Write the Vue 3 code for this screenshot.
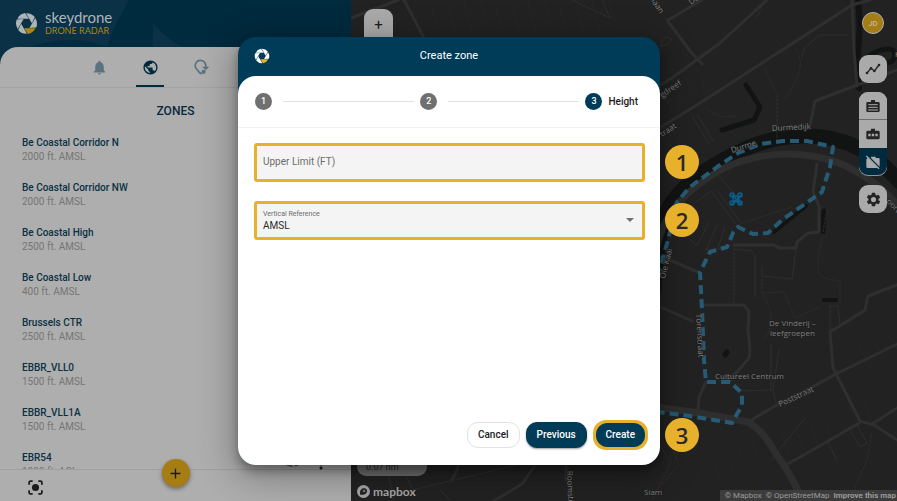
<template>
  <div class="app-shell">
    <aside class="sidebar">
      <header class="brand-bar">
        <svg class="brand-shapes" viewBox="0 0 351 72" preserveAspectRatio="xMinYMin slice" aria-hidden="true">
          <path d="M0 0H129C117 22 111 34 107 47C80 36 40 36 0 62Z" />
          <path d="M153 22C160 32 170 40 184 48V72H152Z" />
        </svg>
        <svg class="brand-logo" viewBox="-12 -12 24 24" aria-hidden="true">
          <path v-for="(blade, i) in blades" :key="i" :d="bladePath" :fill="blade.side" :transform="`rotate(${blade.angle})`" />
        </svg>
        <div class="brand-text">
          <span class="brand-name">skeydrone</span>
          <span class="brand-product">DRONE RADAR</span>
        </div>
      </header>

      <div class="side-card">
        <nav class="tabs">
          <button class="tab" type="button" aria-label="Alerts">
            <svg viewBox="0 0 24 24"><path d="M12 22c1.1 0 2-.9 2-2h-4c0 1.1.9 2 2 2zm6-6v-5c0-3.07-1.63-5.64-4.5-6.32V4a1.5 1.5 0 0 0-3 0v.68C7.64 5.36 6 7.92 6 11v5l-2 2v1h16v-1z" /></svg>
          </button>
          <button class="tab active" type="button" aria-label="Zones">
            <svg viewBox="0 0 24 24"><path d="M12 2a10 10 0 1 0 0 20 10 10 0 0 0 0-20zm-1 17.93A8 8 0 0 1 4.21 10.21L9 15v1c0 1.1.9 2 2 2zm6.9-2.54A2 2 0 0 0 16 16h-1v-3c0-.55-.45-1-1-1H8v-2h2c.55 0 1-.45 1-1V7h2c1.1 0 2-.9 2-2v-.41a8 8 0 0 1 2.9 12.8z" /></svg>
          </button>
          <button class="tab" type="button" aria-label="Flights">
            <svg viewBox="0 0 24 24"><path d="M11 21C6 16 3 13 3 10a7.500 7.500 0 0 1 15-1v3" fill="none" stroke="currentColor" stroke-width="2.400" /><path d="M13 11h10l-5 5z" /><circle cx="15" cy="18" r="3" /><path d="M9 18l2 4 3-2z" /></svg>
          </button>
          <button class="tab" type="button" aria-label="Layers">
            <svg viewBox="0 0 24 24"><path d="M12 3 3 10l9 7 9-7z" /></svg>
          </button>
        </nav>

        <h2 class="side-title">ZONES</h2>

        <ul class="zone-list">
          <li v-for="zone in zones" :key="zone.name" class="zone-item">
            <span class="zone-name">{{ zone.name }}</span>
            <span class="zone-height">{{ zone.height }}</span>
          </li>
        </ul>

        <footer class="side-footer">
          <button class="icon-button focus" type="button" aria-label="Center map">
            <svg viewBox="0 0 24 24"><path d="M3 8V5a2 2 0 0 1 2-2h3M16 3h3a2 2 0 0 1 2 2v3M21 16v3a2 2 0 0 1-2 2h-3M8 21H5a2 2 0 0 1-2-2v-3" fill="none" stroke="currentColor" stroke-width="2.500" /><circle cx="12" cy="12" r="5" /></svg>
          </button>
          <button class="fab" type="button" aria-label="Add zone">
            <svg viewBox="0 0 24 24"><path d="M12 3v18M3 12h18" fill="none" stroke="currentColor" stroke-width="2.500" /></svg>
          </button>
          <span class="footer-extras" aria-hidden="true">
            <svg class="hidden-eye" viewBox="0 0 18 12"><path d="M1 5C4 0 14 0 17 5S4 11 1 5z" /><path d="M5 1l9 9" stroke="#aeaeae" stroke-width="2" /></svg>
            <svg class="more" viewBox="0 0 4 12"><circle cx="2" cy="2" r="1.500" /><circle cx="2" cy="6" r="1.500" /><circle cx="2" cy="10" r="1.500" /></svg>
          </span>
        </footer>
      </div>
    </aside>

    <main class="map">
      <svg class="map-canvas" viewBox="351 0 546 501" preserveAspectRatio="xMinYMin slice" aria-label="Map">
        <rect x="351" y="0" width="546" height="501" fill="#222222" />
        <g class="plots">
          <path v-for="(d, i) in plots" :key="i" :d="d" />
        </g>
        <g class="water">
          <path d="M654 290C656 250 661 218 672 202C690 178 720 160 745 149C785 131 830 132 862 150C878 158 888 170 900 182" stroke-width="15" />
          <path d="M746 85L760 107L754 120L722 130" stroke-width="5" />
          <path d="M806 206L774 232" stroke-width="4" />
          <path d="M824 211L823 232" stroke-width="5" />
          <path d="M824 300H836" stroke-width="4" />
          <path d="M727 352L725 355" stroke-width="5" />
          <path d="M858 2C862 25 858 40 858 58C860 66 858 76 859 88" stroke-width="6" />
          <path d="M860 62C870 55 882 46 893 50C897 58 893 64 884 62C876 58 870 62 860 66" stroke-width="5" />
        </g>
        <g class="roads minor">
          <path v-for="(d, i) in minorRoads" :key="i" :d="d" />
        </g>
        <g class="roads major">
          <path v-for="(d, i) in majorRoads" :key="i" :d="d" />
        </g>
        <g class="roads wide">
          <path d="M656 250C664 210 690 187 724 168C765 149 810 151 844 165C870 178 885 190 900 208" />
          <path d="M640 405L700 413L748 422C767 433 770 447 784 465C792 479 797 486 803 505" />
        </g>
        <g class="paths">
          <path v-for="(d, i) in footPaths" :key="i" :d="d" />
        </g>
        <path class="zone-outline" d="M640 330L661 265L668 240L677 202L690 187L717 167L738 153L760 144L783 141L807 141L833 147L830 167L822 192L782 220L768 233L753 234L738 227L733 233L727 247L710 252L700 272L702 310L704 360L706 382L730 382L742 393L742 405L732 423L683 415L640 410" />
        <g class="drone">
          <path d="M732 195L741 204M741 195L732 204" />
          <circle cx="732" cy="195" r="2" /><circle cx="740" cy="195" r="2" />
          <circle cx="732" cy="203" r="2" /><circle cx="740" cy="203" r="2" />
          <circle cx="736" cy="199" r="3" />
        </g>
        <g class="labels">
          <text v-for="label in mapLabels" :key="label.text" :transform="`translate(${label.x} ${label.y}) rotate(${label.angle})`">{{ label.text }}</text>
        </g>
      </svg>

      <div class="zoom-control">
        <button type="button" aria-label="Zoom in">+</button>
        <button type="button" aria-label="Zoom out">−</button>
      </div>

      <div class="tools">
        <button class="avatar" type="button">JD</button>
        <button class="tool" type="button" aria-label="Tracks">
          <svg viewBox="0 0 24 24"><path d="M3 18l6-7 5 4 7-9" fill="none" stroke="currentColor" stroke-width="2" /><circle cx="3" cy="18" r="2" /><circle cx="9" cy="11" r="2" /><circle cx="14" cy="15" r="2" /><circle cx="21" cy="6" r="2" /></svg>
        </button>
        <div class="tool-group">
          <button class="tool" type="button" aria-label="Full label">
            <svg viewBox="0 0 24 24"><path d="M9 6V3h6v3h5a2 2 0 0 1 2 2v11a2 2 0 0 1-2 2H4a2 2 0 0 1-2-2V8a2 2 0 0 1 2-2z" /><path d="M5 10h14M5 14h14" stroke="#aaaaaa" stroke-width="1.500" /><path d="M5 18h14" stroke="#aaaaaa" stroke-width="2" stroke-dasharray="2 1" /></svg>
          </button>
          <button class="tool" type="button" aria-label="Short label">
            <svg viewBox="0 0 24 24"><path d="M9 7V4h6v3h5a2 2 0 0 1 2 2v9a2 2 0 0 1-2 2H4a2 2 0 0 1-2-2V9a2 2 0 0 1 2-2z" /><path d="M5 13.500h3.500M10.200 13.500h3.500M15.500 13.500h3.500" stroke="#aaaaaa" stroke-width="3.500" /></svg>
          </button>
          <button class="tool selected" type="button" aria-label="No label">
            <svg viewBox="0 0 24 24"><path d="M9 6V4h7v2h4a2 2 0 0 1 2 2v11L9 6zM4 6l15 15H4a2 2 0 0 1-2-2V8l2-2z" /><path d="M2 3l19 19" fill="none" stroke="currentColor" stroke-width="2" /></svg>
          </button>
        </div>
        <button class="tool" type="button" aria-label="Settings">
          <svg class="gear" viewBox="0 0 24 24"><path d="M19.140 12.940a7 7 0 0 0 0-1.880l2.030-1.580a.5.5 0 0 0 .12-.61l-1.920-3.320a.5.5 0 0 0-.59-.22l-2.390.96a7 7 0 0 0-1.620-.94l-.36-2.540a.5.5 0 0 0-.48-.41h-3.840a.5.5 0 0 0-.47.41l-.36 2.540a7 7 0 0 0-1.620.94l-2.390-.96a.5.5 0 0 0-.59.22L2.740 8.870a.5.5 0 0 0 .12.61l2.030 1.580a7 7 0 0 0 0 1.880l-2.030 1.580a.5.5 0 0 0-.12.61l1.920 3.320c.12.22.37.29.59.22l2.390-.96c.5.38 1.030.7 1.620.94l.36 2.540c.05.24.24.41.48.41h3.840c.24 0 .44-.17.47-.41l.36-2.540a7 7 0 0 0 1.620-.94l2.390.96c.22.08.47 0 .59-.22l1.920-3.320a.5.5 0 0 0-.12-.61zM12 15.600a3.600 3.600 0 1 1 0-7.200 3.600 3.600 0 0 1 0 7.200z" /></svg>
        </button>
      </div>

      <div class="map-corner">
        <div class="scale">0.07 nm</div>
        <div class="mapbox">
          <svg viewBox="0 0 24 24" aria-hidden="true"><circle cx="12" cy="12" r="12" fill="#a6a6a6" /><path d="M6 18C4 9 9 5 14 6c5 1 6 6 3 9s-7 3-11 3z" fill="#222222" /><path d="M13 8l1 2 2 1-2 1-1 2-1-2-2-1 2-1z" fill="#a6a6a6" /></svg>
          <span>mapbox</span>
        </div>
      </div>
      <div class="attribution">
        <a href="#">© Mapbox</a>
        <a href="#">© OpenStreetMap</a>
        <a class="improve" href="#">Improve this map</a>
      </div>
    </main>

    <div class="modal-layer">
      <form class="modal" role="dialog" aria-labelledby="modal-title" @submit.prevent>
        <header class="modal-header">
          <svg class="modal-logo" viewBox="-12 -12 24 24" aria-hidden="true">
            <path v-for="(blade, i) in blades" :key="i" :d="bladePath" :fill="blade.modal" :transform="`rotate(${blade.angle})`" />
          </svg>
          <h1 id="modal-title">Create zone</h1>
        </header>

        <div class="modal-body">
          <ol class="stepper">
            <li class="step"><span class="step-number">1</span></li>
            <li class="step-line" aria-hidden="true"></li>
            <li class="step"><span class="step-number">2</span></li>
            <li class="step-line" aria-hidden="true"></li>
            <li class="step current"><span class="step-number">3</span>Height</li>
          </ol>

          <div class="fields">
            <div class="field">
              <label v-show="upperLimit === ''" for="upper-limit" class="inside-label">Upper Limit (FT)</label>
              <input id="upper-limit" v-model="upperLimit" type="text" />
              <span class="callout">1</span>
            </div>
            <div class="field select-field">
              <label for="vertical-reference">Vertical Reference</label>
              <select id="vertical-reference" v-model="verticalReference">
                <option>AMSL</option>
                <option>AGL</option>
              </select>
              <svg class="arrow" viewBox="0 0 8 4" aria-hidden="true"><path d="M0 0h8L4 4z" /></svg>
              <span class="callout">2</span>
            </div>
          </div>

          <footer class="actions">
            <button class="btn" type="button">Cancel</button>
            <button class="btn primary" type="button">Previous</button>
            <div class="highlight">
              <button class="btn primary" type="submit">Create</button>
              <span class="callout">3</span>
            </div>
          </footer>
        </div>
      </form>
    </div>
  </div>
</template>

<script setup>
import { ref } from 'vue'

const upperLimit = ref('')
const verticalReference = ref('AMSL')

const zones = [
  { name: 'Be Coastal Corridor N', height: '2000 ft. AMSL' },
  { name: 'Be Coastal Corridor NW', height: '2000 ft. AMSL' },
  { name: 'Be Coastal High', height: '2500 ft. AMSL' },
  { name: 'Be Coastal Low', height: '400 ft. AMSL' },
  { name: 'Brussels CTR', height: '2500 ft. AMSL' },
  { name: 'EBBR_VLL0', height: '1500 ft. AMSL' },
  { name: 'EBBR_VLL1A', height: '1500 ft. AMSL' },
  { name: 'EBR54', height: '1000 ft. AGL' }
]

// logo blades, one of them in the accent colour
const bladePath = 'M-9.500 -5A11 11 0 0 1 -1.500 -10.900L2.500 -5Z'
const blades = [0, 60, 120, 180, 240, 300].map(angle => ({
  angle,
  side: angle === 180 ? '#b08415' : '#adb5b9',
  modal: angle === 180 ? '#e8b12b' : '#ffffff'
}))

// map geometry
const majorRoads = [
  'M351 18L398 0',
  'M404 0L424 38',
  'M640 140L700 103L852 5L870 0',
  'M640 98L672 78L720 43L767 0',
  'M667 20L690 51L702 64',
  'M852 0L854 50L857 86',
  'M897 70L815 101L810 125',
  'M817 164L813 192L819 206V232L808 233L797 242L796 248H780L773 245H734',
  'M704 305H744L749 312L748 330L750 350L749 358L737 372L724 382',
  'M897 285L868 296L865 310L830 332L833 368L860 421L874 425L897 440',
  'M748 422L780 403L805 391L836 374L897 344',
  'M786 465L830 440L861 422M872 424L900 406',
  'M698 412L699 397L706 382',
  'M668 20L702 0',
  'M458 462V468L452 480',
  'M492 502L522 484L536 464',
  'M566 464V480',
  'M640 250L672 261L700 273',
  'M640 298L692 321'
]
const minorRoads = [
  'M796 248L794 265L792 279L762 276V267',
  'M734 249L752 251L755 257V297',
  'M738 227L712 192M740 222L718 191',
  'M830 306H838L840 326M830 306V332',
  'M692 116L709 144M697 114L713 141',
  'M850 430L860 447L867 443L857 425',
  'M828 442L837 461',
  'M740 391L773 390L777 407M773 390L779 350',
  'M771 460L805 418',
  'M771 345V390',
  'M709 222L697 246L690 240M717 225L706 250L728 248M725 227L718 248',
  'M712 191L696 202M719 176L742 202',
  'M386 464L394 500M401 464L413 490L475 475L520 464',
  'M440 490L450 500M610 18L602 0M610 18L572 0',
  'M662 46C660 38 665 35 672 39L667 45L660 46',
  'M755 18L762 9M802 58L804 48L820 35L847 35'
]
const footPaths = [
  'M796 49C806 65 797 80 785 100',
  'M765 70L777 93V141',
  'M706 108C720 120 728 116 737 116',
  'M827 210L818 260C816 280 824 278 840 281L840 306',
  'M734 249V304',
  'M763 294C768 305 778 320 764 340',
  'M762 275V293L784 292L795 318L818 308',
  'M738 225L770 214L792 207',
  'M671 445L679 465L661 485M651 430L671 463L652 500',
  'M872 432L867 460L858 480L850 500'
]
const plots = []
for (let i = 0; i < 12; i++) {
  plots.push(`M${660 + i * 12} ${90 - i * 7}l12 18`)
  plots.push(`M${720 + i * 14} ${480 - i * 5}l-10 -24`)
  plots.push(`M${440 + i * 16} ${38 - (i % 4) * 3}l-8 -30`)
  plots.push(`M${830 + (i % 5) * 14} ${360 - i * 7}l12 18`)
}

const mapLabels = [
  { text: 'Durmedijk', x: 772, y: 131, angle: -3 },
  { text: 'Durme', x: 732, y: 153, angle: -18 },
  { text: 'De Vinderij –', x: 769, y: 326, angle: 0 },
  { text: 'leefgroepen', x: 770, y: 336, angle: 0 },
  { text: 'Cultureel Centrum', x: 715, y: 379, angle: 0 },
  { text: 'Poststraat', x: 780, y: 407, angle: -25 },
  { text: 'Torenstraat', x: 696, y: 314, angle: 87 },
  { text: 'Ole Kaai', x: 665, y: 279, angle: -76 },
  { text: 'Siam', x: 644, y: 495, angle: 0 },
  { text: 'Roomstraat', x: 567, y: 471, angle: 88 },
  { text: 'gdreef', x: 662, y: 98, angle: -34 },
  { text: 'traat', x: 662, y: 137, angle: -33 },
  { text: 'laan', x: 651, y: 1, angle: 55 },
  { text: 'Dam', x: 691, y: 5, angle: -35 },
  { text: 'oort', x: 886, y: 202, angle: 45 },
  { text: 'Kon', x: 895, y: 57, angle: 0 }
]
</script>

<style>
body {
  margin: 0;
  background: #222222;
}
</style>

<style scoped>
.app-shell {
  display: flex;
  height: 100vh;
  min-height: 480px;
  overflow: hidden;
  position: relative;
  font-family: Roboto, "Liberation Sans", sans-serif;
  color: #1c1c1c;
}

button {
  font-family: inherit;
  padding: 0;
  border: none;
  cursor: pointer;
}

svg {
  display: block;
  fill: currentColor;
}

/* sidebar */
.sidebar {
  flex: 0 0 351px;
  display: flex;
  flex-direction: column;
  background: #002a3e;
}

.brand-bar {
  position: relative;
  display: flex;
  align-items: center;
  gap: 7px;
  height: 47px;
  padding-left: 15px;
}

.brand-shapes {
  position: absolute;
  top: 0;
  left: 0;
  width: 100%;
  height: 72px;
  fill: #0a3146;
}

.brand-logo {
  position: relative;
  width: 23px;
  height: 23px;
}

.brand-text {
  position: relative;
  display: flex;
  flex-direction: column;
  padding-bottom: 2px;
  font-family: Lato, sans-serif;
}

.brand-name {
  font-size: 15px;
  line-height: 16px;
  color: #adb5b9;
}

.brand-product {
  font-size: 9px;
  line-height: 11px;
  color: #b08415;
}

.side-card {
  position: relative;
  flex: 1;
  min-height: 0;
  display: flex;
  flex-direction: column;
  background: #aeaeae;
  border-radius: 18px 18px 0 0;
}

.tabs {
  display: flex;
  justify-content: center;
  gap: 23px;
  height: 40px;
  border-bottom: 1px solid #a3a3a3;
}

.tab {
  display: flex;
  align-items: center;
  justify-content: center;
  width: 28px;
  padding-top: 2px;
  background: none;
  color: #5a737e;
  border-bottom: 2px solid transparent;
}

.tab svg {
  flex: none;
  width: 17px;
  height: 17px;
}

.tab.active {
  color: #002a3e;
  border-bottom-color: #002a3e;
}

.side-title {
  margin: 15px 0 0;
  font-size: 12px;
  line-height: 16px;
  font-weight: 500;
  text-align: center;
  color: #06293b;
}

.zone-list {
  flex: 1;
  min-height: 0;
  overflow: hidden;
  margin: 0;
  padding: 17px 22px 0;
  list-style: none;
}

.zone-item {
  display: flex;
  flex-direction: column;
  height: 45px;
}

.zone-name {
  font-size: 10px;
  line-height: 14px;
  font-weight: 500;
  color: #0b3144;
}

.zone-height {
  font-size: 10px;
  line-height: 14px;
  color: #757575;
}

.side-footer {
  display: grid;
  grid-template-columns: 1fr auto 1fr;
  height: 31px;
  border-top: 1px solid #a0a0a0;
}

.icon-button {
  justify-self: start;
  align-self: center;
  margin: 4px 0 0 27px;
  background: none;
  color: #1c1c1c;
}

.icon-button svg {
  width: 17px;
  height: 17px;
}

.fab {
  display: flex;
  align-items: center;
  justify-content: center;
  width: 28px;
  height: 28px;
  margin-top: -11px;
  border-radius: 50%;
  background: #a57d14;
  color: #1c1c1c;
  box-shadow: 0 2px 4px rgba(0, 0, 0, 0.4);
}

.fab svg {
  width: 13px;
  height: 13px;
}

.footer-extras {
  display: flex;
  gap: 20px;
  justify-content: flex-end;
  margin-top: -12px;
  padding-right: 28px;
}

.hidden-eye {
  width: 16px;
  height: 12px;
  color: #555555;
}

.more {
  width: 4px;
  height: 12px;
}

/* map */
.map {
  position: relative;
  flex: 1;
  min-width: 0;
  overflow: hidden;
}

.map-canvas {
  width: 100%;
  height: 100%;
}

.map-canvas path {
  fill: none;
  stroke-linecap: round;
  stroke-linejoin: round;
}

.plots path {
  stroke: #262626;
}

.water path {
  stroke: #121414;
}

.roads.minor path {
  stroke: #2e2e2e;
}

.roads.major path {
  stroke: #2f2f2f;
  stroke-width: 3;
}

.roads.wide path {
  stroke: #2e2e2e;
  stroke-width: 7;
}

.paths path {
  stroke: #2e2e2e;
  stroke-dasharray: 2 2;
}

.map-canvas .zone-outline {
  stroke: #265b75;
  stroke-width: 4;
  stroke-linecap: butt;
  stroke-dasharray: 9 5;
}

.drone path,
.drone circle {
  fill: none;
  stroke: #0b608f;
  stroke-width: 1.5;
}

.labels text {
  font-family: "Open Sans", sans-serif;
  font-size: 8px;
  fill: #818181;
  stroke: #1c1c1c;
  stroke-width: 1px;
  paint-order: stroke;
}

.zoom-control {
  position: absolute;
  top: 9px;
  left: 13px;
  display: flex;
  flex-direction: column;
  overflow: hidden;
  border-radius: 9px;
  background: #aaaaaa;
}

.zoom-control button {
  width: 29px;
  height: 32px;
  background: none;
  color: #1c1c1c;
  font-size: 15px;
}

.tools {
  position: absolute;
  top: 12px;
  right: 10px;
  display: flex;
  flex-direction: column;
  align-items: center;
  gap: 9px;
}

.avatar {
  box-sizing: border-box;
  width: 22px;
  height: 22px;
  margin-bottom: 12px;
  border: 1px solid #b0b0b0;
  border-radius: 50%;
  background: #a57d14;
  color: #c0b89a;
  font-size: 8px;
  font-weight: 500;
}

.tool {
  display: flex;
  align-items: center;
  justify-content: center;
  width: 28px;
  height: 28px;
  border-radius: 9px;
  background: #aaaaaa;
  color: #242424;
}

.tool svg {
  width: 16px;
  height: 16px;
}

.tool .gear {
  width: 17px;
  height: 17px;
}

.tool-group {
  overflow: hidden;
  border-radius: 9px;
  background: #aaaaaa;
}

.tool-group .tool {
  border-radius: 0;
}

.tool-group .tool + .tool {
  box-shadow: 0 -1px #6c6c6c;
}

.tool-group .tool.selected {
  background: #002a3e;
  color: #aaaaaa;
  border-radius: 0 0 9px 9px;
  box-shadow: inset 0 -1px #8b969b;
}

.map-corner {
  position: absolute;
  left: 6px;
  bottom: 3px;
  display: flex;
  flex-direction: column;
  gap: 9px;
}

.scale {
  box-sizing: border-box;
  width: 70px;
  height: 21px;
  padding-left: 9px;
  border-radius: 9px;
  background: #6e6e6e;
  color: #242424;
  font-size: 9px;
  line-height: 24px;
}

.mapbox {
  display: flex;
  align-items: center;
  gap: 3px;
  font-family: Lato, sans-serif;
  font-size: 12px;
  line-height: 13px;
  font-weight: 700;
  color: #a6a6a6;
}

.mapbox svg {
  width: 13px;
  height: 13px;
}

.attribution {
  position: absolute;
  right: 0;
  bottom: 0;
  display: flex;
  gap: 4px;
  padding: 0 1px 0 5px;
  background: #3c3c3c;
  font-size: 8px;
  line-height: 11px;
  white-space: nowrap;
}

.attribution a {
  color: #9a9a9a;
  text-decoration: none;
}

.attribution .improve {
  font-weight: 700;
}

/* modal */
.modal-layer {
  position: absolute;
  inset: 0;
  display: flex;
  align-items: center;
  justify-content: center;
  padding-left: 1px;
}

.modal {
  display: flex;
  flex-direction: column;
  width: 422px;
  max-width: 90%;
  min-height: 428px;
  border-radius: 18px;
  background: #003b57;
  box-shadow: 0 6px 10px rgba(0, 0, 0, 0.3), 0 8px 36px 4px rgba(0, 0, 0, 0.3);
}

.modal-header {
  display: grid;
  grid-template-columns: 1fr auto 1fr;
  align-items: center;
  height: 39px;
  padding: 0 16px;
}

.modal-logo {
  width: 16px;
  height: 16px;
}

.modal-header h1 {
  margin: 0;
  font-size: 11px;
  line-height: 16px;
  font-weight: 400;
  color: #ffffff;
}

.modal-body {
  flex: 1;
  display: flex;
  flex-direction: column;
  border-radius: 18px;
  background: #ffffff;
}

.stepper {
  display: flex;
  align-items: center;
  height: 51px;
  margin: 0;
  padding: 0 22px 0 17px;
  list-style: none;
  border-bottom: 1px solid #f2f2f2;
}

.step {
  display: flex;
  align-items: center;
  gap: 6px;
  font-size: 10px;
  font-weight: 500;
}

.step-number {
  width: 17px;
  height: 17px;
  border-radius: 50%;
  background: #707070;
  color: #ffffff;
  font-size: 9px;
  line-height: 17px;
  text-align: center;
}

.step.current .step-number {
  background: #003b57;
}

.step-line {
  flex: 1;
  height: 1px;
  margin: 0 6px 0 11px;
  background: #e2e2e2;
}

.fields {
  flex: 1;
  display: flex;
  flex-direction: column;
  gap: 19px;
  padding: 15px 15px 15px 16px;
}

.field {
  position: relative;
  box-sizing: border-box;
  display: grid;
  align-items: center;
  height: 39px;
  padding: 0 6px;
  border: 3px solid #e8b12b;
  border-radius: 3px;
  background: #f4f4f4;
}

.field label {
  font-size: 10px;
  line-height: 12px;
  color: #6c6c6c;
}

.inside-label,
.field input {
  grid-area: 1 / 1;
}

.field input,
.field select {
  width: 100%;
  padding: 0;
  border: none;
  outline: none;
  background: none;
  font-family: inherit;
  font-size: 10px;
  line-height: 12px;
  color: #2a2a2a;
}

.select-field {
  grid-template-columns: 1fr 8px;
  align-content: center;
  padding: 0 8px 0 6px;
}

.select-field label {
  grid-area: 1 / 1;
  font-size: 7px;
}

.select-field select {
  grid-area: 2 / 1;
  appearance: none;
}

.arrow {
  grid-area: 1 / 2 / 3 / 3;
  width: 8px;
  height: 4px;
  color: #707070;
}

.callout {
  position: absolute;
  top: 50%;
  left: calc(100% + 23px);
  width: 34px;
  height: 34px;
  margin-top: -17px;
  border-radius: 50%;
  background: #e8b12b;
  color: #2a2a2a;
  font-family: "Open Sans", sans-serif;
  font-size: 22px;
  font-weight: 600;
  line-height: 34px;
  text-align: center;
}

.actions {
  display: flex;
  align-items: center;
  justify-content: flex-end;
  gap: 6px;
  padding: 0 12px 15px;
}

.btn {
  box-sizing: border-box;
  height: 26px;
  padding: 0 10px;
  border: 1px solid #e2e2e2;
  border-radius: 11px;
  background: #ffffff;
  color: #1c1c1c;
  font-size: 10px;
  font-weight: 500;
}

.btn.primary {
  border-color: #003b57;
  background: #003b57;
  color: #ffffff;
  box-shadow: 0 1px 2px rgba(0, 0, 0, 0.4);
}

.highlight {
  position: relative;
  display: flex;
  border: 3px solid #e8b12b;
  border-radius: 13px;
  background: #e8b12b;
}

.highlight .btn {
  height: 24px;
  padding: 0 9px;
  box-shadow: none;
}

.highlight .callout {
  left: calc(100% + 20px);
}
</style>
